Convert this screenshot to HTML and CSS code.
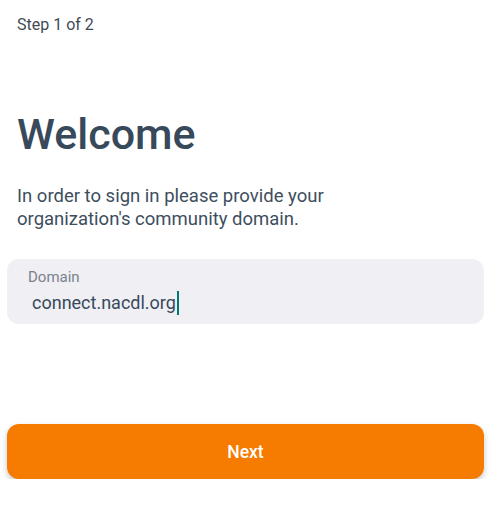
FILE: index.html
```html
<!DOCTYPE html>
<html lang="en">

<head>
    <meta charset="UTF-8" />
    <title>Sign in</title>
    <link rel="stylesheet" href="styles.css">
</head>

<body>
    <div class="screen">
        <div class="step">Step 1 of 2</div>

        <h1 class="title">Welcome</h1>
        <p class="intro">In order to sign in please provide your organization's community domain.</p>

        <div class="field">
            <label class="field-label" for="domain">Domain</label>
            <div class="field-value">
                <span id="domain">connect.nacdl.org</span><span class="caret"></span>
            </div>
        </div>

        <button class="next-btn">Next</button>
    </div>
</body>

</html>
```

FILE: styles.css
```css
:root {
    --text-color: #37495a;
    --muted: #3f4a55;
    --label: #7b828b;
    --field-bg: #efeff4;
    --accent: #f57c00;
    --caret: #00796b;
}

body {
    font-family: Roboto, 'Noto Sans', sans-serif;
    background: #ffffff;
    color: var(--text-color);
    margin: 0;
}

.screen {
    padding: 14px 16px 0 7px;
    display: flex;
    flex-direction: column;
}

.step {
    font-size: 16px;
    line-height: 22px;
    color: var(--muted);
    padding-left: 10px;
}

.title {
    font-size: 43px;
    font-weight: 500;
    line-height: 50px;
    margin: 73px 0 0 10px;
    color: var(--text-color);
}

.intro {
    font-size: 18.5px;
    line-height: 23px;
    margin: 26px 0 0 10px;
    max-width: 330px;
    color: #3d4e5e;
}

.field {
    margin-top: 28px;
    background: var(--field-bg);
    border-radius: 12px;
    height: 65px;
    padding: 9px 20px 0 20px;
    box-sizing: border-box;
}

.field-label {
    display: block;
    font-size: 15px;
    line-height: 19px;
    color: var(--label);
    padding-left: 1px;
}

.field-value {
    margin-top: 3px;
    font-size: 18px;
    line-height: 26px;
    padding-left: 5px;
    color: var(--text-color);
    display: flex;
    align-items: center;
}

.caret {
    display: inline-block;
    width: 2px;
    height: 24px;
    background: var(--caret);
    margin-left: 1px;
}

.next-btn {
    margin-top: 100px;
    height: 55px;
    background: var(--accent);
    color: #ffffff;
    border: none;
    border-radius: 12px;
    font-family: Roboto, 'Noto Sans', sans-serif;
    font-size: 17.5px;
    font-weight: 500;
    box-shadow: 0 3px 6px rgba(0, 0, 0, 0.22);
    cursor: pointer;
}
```
